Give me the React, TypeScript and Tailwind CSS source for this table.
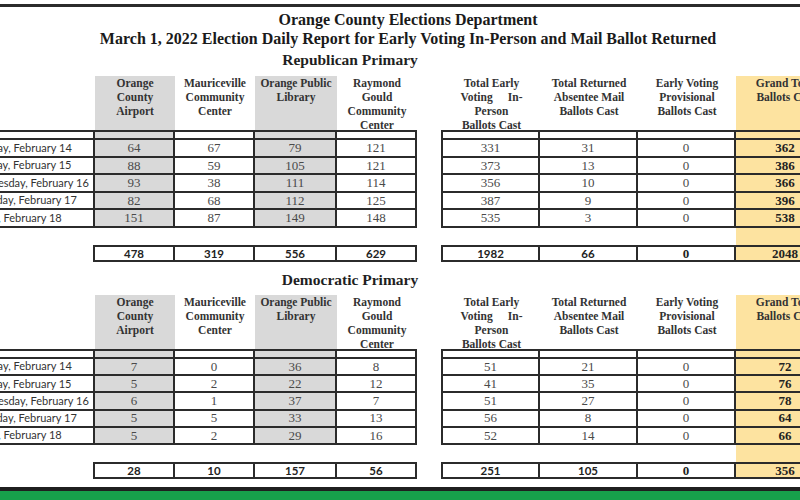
import React from 'react';

const serif = "font-['Liberation_Serif','Times_New_Roman',serif]";
const sans = "font-['Lato','Liberation_Sans',sans-serif]";
const line = 'border-[#2b2b2b]';
const gray = 'bg-[#d9d9d9]';
const yellow = 'bg-[#fde3a0]';

const days = [
  'Monday, February 14',
  'Tuesday, February 15',
  'Wednesday, February 16',
  'Thursday, February 17',
  'Friday, February 18',
];

const leftW = ['w-[80px]', 'w-[80px]', 'w-[82px]', 'w-[80px]'];
const leftBg = [gray, '', gray, ''];
const rightW = ['w-[97px]', 'w-[98px]', 'w-[98px]', 'w-[100px]'];
const rightBg = ['', '', '', yellow];

const leftHeads = [
  ['Orange', 'County', 'Airport'],
  ['Mauriceville', 'Community', 'Center'],
  ['Orange Public', 'Library'],
  ['Raymond', 'Gould', 'Community', 'Center'],
];

const rightHeads = [
  ['Total Early', 'Voting|In-', 'Person', 'Ballots Cast'],
  ['Total Returned', 'Absentee Mail', 'Ballots Cast'],
  ['Early Voting', 'Provisional', 'Ballots Cast'],
  ['Grand Total', 'Ballots Cast'],
];

const republican = {
  rows: [
    [64, 67, 79, 121, 331, 31, 0, 362],
    [88, 59, 105, 121, 373, 13, 0, 386],
    [93, 38, 111, 114, 356, 10, 0, 366],
    [82, 68, 112, 125, 387, 9, 0, 396],
    [151, 87, 149, 148, 535, 3, 0, 538],
  ],
  totals: [478, 319, 556, 629, 1982, 66, 0, 2048],
};

const democratic = {
  rows: [
    [7, 0, 36, 8, 51, 21, 0, 72],
    [5, 2, 22, 12, 41, 35, 0, 76],
    [6, 1, 37, 7, 51, 27, 0, 78],
    [5, 5, 33, 13, 56, 8, 0, 64],
    [5, 2, 29, 16, 52, 14, 0, 66],
  ],
  totals: [28, 10, 157, 56, 251, 105, 0, 356],
};

function HeadText({ lines }: { lines: string[] }) {
  return (
    <div className={`${serif} text-[11.5px] font-bold leading-[14px] text-[#333] text-center`}>
      {lines.map((l) =>
        l.includes('|') ? (
          <div key={l} className="flex justify-between w-[62px] mx-auto">
            {l.split('|').map((p) => (
              <span key={p}>{p}</span>
            ))}
          </div>
        ) : (
          <div key={l} className="whitespace-nowrap">
            {l}
          </div>
        )
      )}
    </div>
  );
}

type PrimaryProps = {
  title: string;
  data: { rows: number[][]; totals: number[] };
  titleCls: string;
  rowH: string;
  gapH: string;
  totH: string;
};

function Primary({ title, data, titleCls, rowH, gapH, totH }: PrimaryProps) {
  const cell = 'flex items-center justify-center';
  return (
    <section>
      <h2 className={`${serif} text-[15.5px] font-bold leading-[18px] text-[#1f1f1f] text-center pr-[100px] ${titleCls}`}>
        {title}
      </h2>
      <div className="flex -ml-[35px]">
        {/* polling places */}
        <div className="flex flex-col w-[452px] shrink-0">
          <div className="flex h-[54px]">
            <div className="w-[130px]" />
            {leftHeads.map((h, i) => (
              <div key={i} className={`${leftW[i]} ${leftBg[i]}`}>
                <HeadText lines={h} />
              </div>
            ))}
          </div>
          <div className={`flex h-[10px] border-y-2 ${line}`}>
            <div className={`w-[130px] border-r-2 ${line}`} />
            {leftW.map((w, i) => (
              <div key={i} className={`${w} ${leftBg[i]} border-r-2 ${line}`} />
            ))}
          </div>
          {data.rows.map((r, ri) => (
            <div key={ri} className={`flex ${rowH} border-b-2 ${line}`}>
              <div className={`w-[130px] border-r-2 ${line} pl-[4px] flex items-center ${sans} text-[11px] text-[#333] whitespace-nowrap overflow-hidden`}>
                {days[ri]}
              </div>
              {r.slice(0, 4).map((v, i) => (
                <div key={i} className={`${leftW[i]} ${leftBg[i]} border-r-2 ${line} ${cell} ${serif} text-[13px] text-[#4a4a4a]`}>
                  {v}
                </div>
              ))}
            </div>
          ))}
          <div className={gapH} />
          <div className={`flex ${totH}`}>
            <div className="w-[128px]" />
            <div className={`flex border-y-2 border-l-2 ${line}`}>
              {data.totals.slice(0, 4).map((v, i) => (
                <div key={i} className={`${leftW[i]} border-r-2 ${line} ${cell} ${sans} text-[11.5px] font-bold text-[#222]`}>
                  {v}
                </div>
              ))}
            </div>
          </div>
        </div>

        <div className="w-[24px] shrink-0" />

        {/* totals */}
        <div className="flex flex-col w-[395px] shrink-0">
          <div className="flex h-[54px] border-l-2 border-transparent">
            {rightHeads.map((h, i) => (
              <div key={i} className={`${rightW[i]} ${rightBg[i]}`}>
                <HeadText lines={h} />
              </div>
            ))}
          </div>
          <div className={`flex h-[10px] border-y-2 border-l-2 ${line}`}>
            {rightW.map((w, i) => (
              <div key={i} className={`${w} ${rightBg[i]} border-r-2 ${line}`} />
            ))}
          </div>
          {data.rows.map((r, ri) => (
            <div key={ri} className={`flex ${rowH} border-b-2 border-l-2 ${line}`}>
              {r.slice(4).map((v, i) => (
                <div
                  key={i}
                  className={`${rightW[i]} ${rightBg[i]} border-r-2 ${line} ${cell} ${serif} text-[13px] ${
                    i === 3 ? 'font-bold text-[#222]' : 'text-[#4a4a4a]'
                  }`}
                >
                  {v}
                </div>
              ))}
            </div>
          ))}
          <div className={`flex ${gapH} border-l-2 border-transparent`}>
            {rightW.map((w, i) => (
              <div key={i} className={`${w} ${rightBg[i]}`} />
            ))}
          </div>
          <div className={`flex ${totH} border-y-2 border-l-2 ${line}`}>
            {data.totals.slice(4).map((v, i) => (
              <div
                key={i}
                className={`${rightW[i]} ${rightBg[i]} border-r-2 ${line} ${cell} font-bold text-[#222] ${
                  i >= 2 ? `${serif} text-[13px]` : `${sans} text-[11.5px]`
                }`}
              >
                {v}
              </div>
            ))}
          </div>
        </div>
      </div>
    </section>
  );
}

export default function App() {
  return (
    <div className="w-[800px] h-[500px] overflow-hidden bg-white flex flex-col">
      <div className="mt-[4px] h-[3px] bg-[#2b2b2b] shrink-0" />
      <header className={`${serif} font-bold text-[16px] leading-[19px] text-[#1a1a1a] text-center pl-[16px] pt-[3px] whitespace-nowrap`}>
        <h1>Orange County Elections Department</h1>
        <p>March 1, 2022 Election Daily Report for Early Voting In-Person and Mail Ballot Returned</p>
      </header>
      <Primary
        title="Republican Primary"
        data={republican}
        titleCls="mt-[3px] mb-[7px]"
        rowH="h-[17.5px]"
        gapH="h-[17.5px]"
        totH="h-[17px]"
      />
      <Primary
        title="Democratic Primary"
        data={democratic}
        titleCls="mt-[9px] mb-[6px]"
        rowH="h-[17.2px]"
        gapH="h-[17.5px]"
        totH="h-[16.5px]"
      />
      <div className="mt-auto h-[4px] bg-[#1f1f1f] shrink-0" />
      <div className="h-[9px] bg-[#17a04b] shrink-0" />
    </div>
  );
}
